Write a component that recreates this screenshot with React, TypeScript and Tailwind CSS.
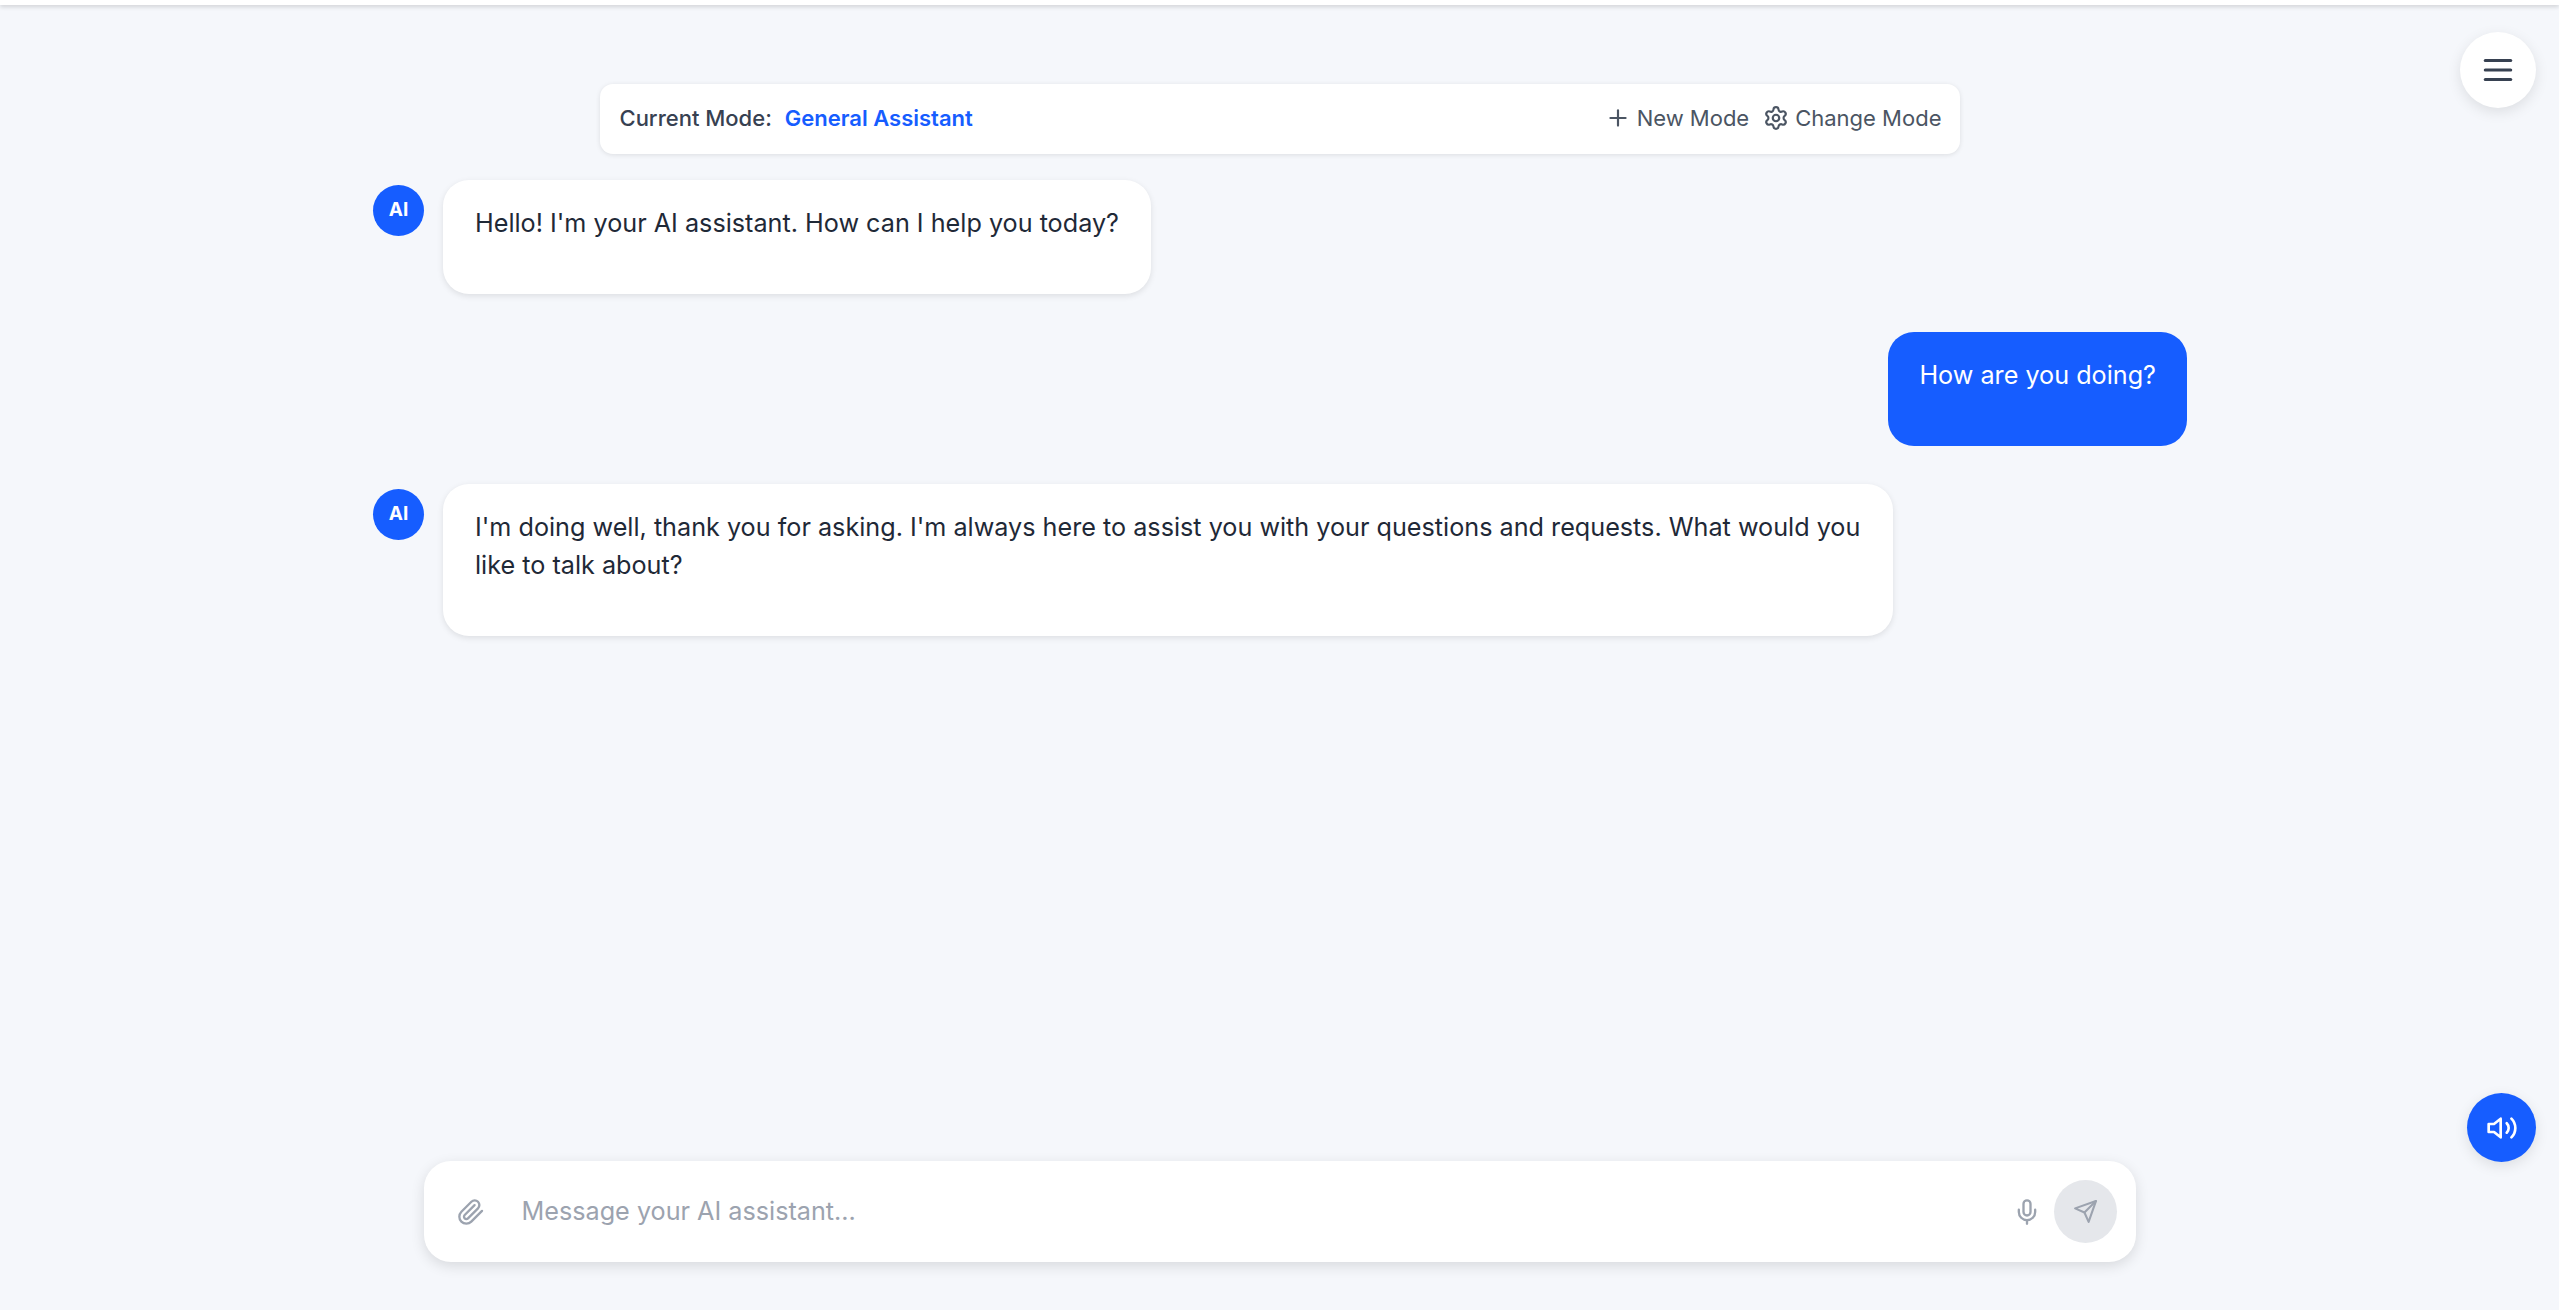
import { Mic, Plus, Settings } from "lucide-react";

function Avatar() {
  return (
    <div className="flex h-[51px] w-[51px] shrink-0 items-center justify-center rounded-full bg-[#165dff] text-[19px] font-bold text-white">
      AI
    </div>
  );
}

function AiMessage({ text }: { text: string }) {
  return (
    <div className="flex items-start gap-[19px]">
      <div className="pt-[5px] pl-[1px]">
        <Avatar />
      </div>
      <div className="max-w-[1450px] rounded-[26px] bg-white px-[32px] pt-[24px] pb-[52px] text-[25.2px] leading-[38px] text-[#1f2937] shadow-[0_2px_6px_rgba(0,0,0,0.1)]">
        {text}
      </div>
    </div>
  );
}

export default function App() {
  return (
    <div className="relative flex h-screen w-full flex-col overflow-hidden bg-[#f5f7fb] font-['Inter',sans-serif]">
      <div className="h-[5px] w-full bg-white shadow-[0_2px_4px_rgba(0,0,0,0.15)]" />

      <main className="mx-auto flex w-[1815px] flex-1 flex-col">
        <div className="mx-auto mt-[79px] flex h-[70px] w-[1360px] items-center justify-between rounded-[13px] bg-white pr-[18px] pb-[2px] pl-[20px] text-[22px] shadow-[0_1px_5px_rgba(0,0,0,0.1)]">
          <div className="flex items-center gap-[13px]">
            <span className="font-medium text-[#374151]">Current Mode:</span>
            <span className="font-semibold text-[#165dff]">General Assistant</span>
          </div>
          <div className="flex items-center gap-[14px] text-[#4b5563]">
            <button className="flex items-center gap-[6px]">
              <Plus size={26} strokeWidth={2} />
              New Mode
            </button>
            <button className="flex items-center gap-[6px]">
              <Settings size={26} strokeWidth={2} />
              Change Mode
            </button>
          </div>
        </div>

        <div className="mt-[26px] flex flex-col gap-[38px]">
          <AiMessage text="Hello! I'm your AI assistant. How can I help you today?" />
          <div className="flex justify-end">
            <div className="rounded-[26px] bg-[#165dff] px-[31px] pt-[24px] pb-[52px] text-[25.2px] leading-[38px] text-white">
              How are you doing?
            </div>
          </div>
          <AiMessage text="I'm doing well, thank you for asking. I'm always here to assist you with your questions and requests. What would you like to talk about?" />
        </div>

        <div className="mx-auto mt-auto mb-[48px] flex h-[101px] w-[1712px] items-center rounded-[27px] bg-white pr-[19px] pl-[33px] shadow-[0_4px_14px_rgba(0,0,0,0.12)]">
          <svg width="28" height="28" viewBox="0 0 24 24" fill="none" stroke="currentColor" strokeWidth="2" strokeLinecap="round" strokeLinejoin="round" className="text-[#9ca3af]">
            <path d="m21.44 11.05-9.19 9.19a6 6 0 0 1-8.49-8.49l8.57-8.57A4 4 0 1 1 18 8.84l-8.59 8.57a2 2 0 0 1-2.83-2.83l8.49-8.48" />
          </svg>
          <div className="ml-[37px] flex-1 text-[25.2px] text-[#9ca3af]">Message your AI assistant...</div>
          <Mic size={28} className="mr-[13px] text-[#9ca3af]" strokeWidth={2} />
          <button className="flex h-[63px] w-[63px] items-center justify-center rounded-full bg-[#e5e7eb] text-[#9ca3af]">
            <svg width="25" height="25" viewBox="0 0 24 24" fill="none" stroke="currentColor" strokeWidth="2" strokeLinecap="round" strokeLinejoin="round">
              <path d="m22 2-7 20-4-9-9-4Z" />
              <path d="M22 2 11 13" />
            </svg>
          </button>
        </div>
      </main>

      <button className="absolute top-[32px] right-[23px] flex h-[76px] w-[76px] items-center justify-center rounded-full bg-white text-[#374151] shadow-[0_4px_14px_rgba(0,0,0,0.1)]">
        <svg width="38" height="38" viewBox="0 0 24 24" fill="none" stroke="currentColor" strokeWidth="2" strokeLinecap="round" strokeLinejoin="round">
          <path d="M4 6h16" />
          <path d="M4 12h16" />
          <path d="M4 18h16" />
        </svg>
      </button>
      <button className="absolute top-[1093px] right-[23px] flex h-[69px] w-[69px] items-center justify-center rounded-full bg-[#165dff] text-white shadow-[0_4px_14px_rgba(0,0,0,0.1)]">
        <svg width="32" height="32" viewBox="0 0 24 24" fill="none" stroke="currentColor" strokeWidth="2" strokeLinecap="round" strokeLinejoin="round">
          <polygon points="11 5 6 9 2 9 2 15 6 15 11 19 11 5" />
          <path d="M15.54 8.46a5 5 0 0 1 0 7.07" />
          <path d="M19.07 4.93a10 10 0 0 1 0 14.14" />
        </svg>
      </button>
    </div>
  );
}
